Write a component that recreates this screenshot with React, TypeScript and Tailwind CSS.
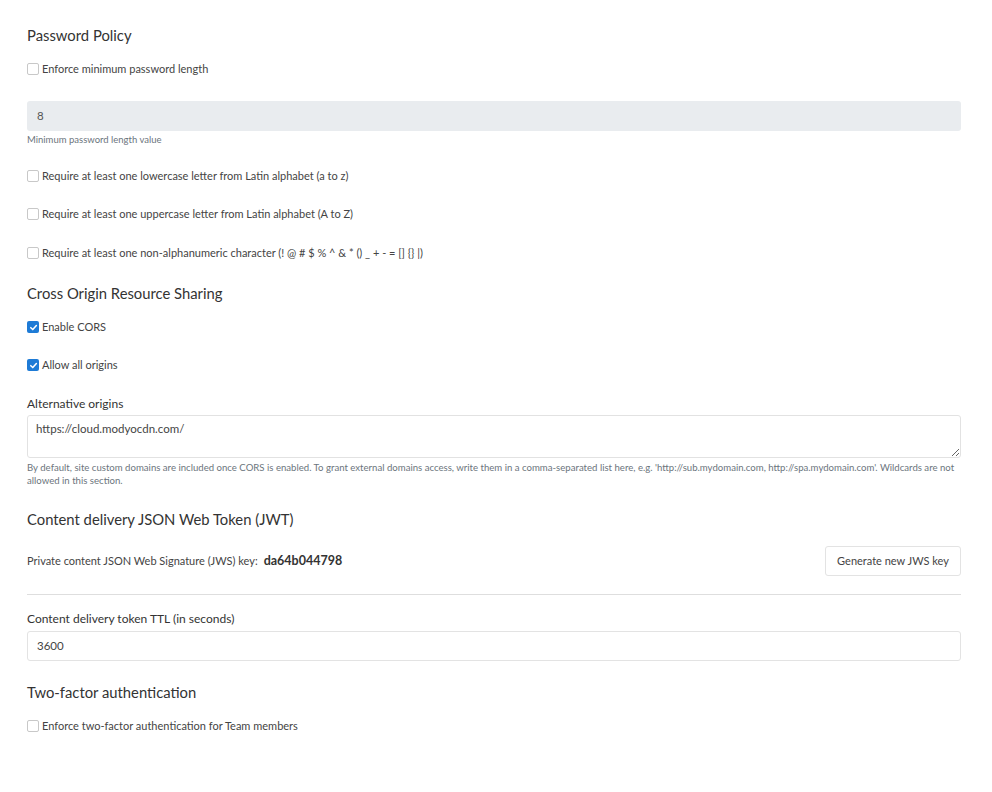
import React from "react";

const font = { fontFamily: "Lato, 'Noto Sans', sans-serif" };

function Check({ checked, label, className = "" }: { checked?: boolean; label: string; className?: string }) {
  return (
    <div className={"flex items-center h-4 " + className}>
      {checked ? (
        <span className="w-3 h-3 rounded-[2px] bg-[#1e7bd6] flex items-center justify-center">
          <svg width="9" height="9" viewBox="0 0 10 10">
            <path d="M2 5.2 L4.2 7.3 L8.2 2.8" stroke="white" strokeWidth="1.7" fill="none" strokeLinecap="round" strokeLinejoin="round" />
          </svg>
        </span>
      ) : (
        <span className="w-3 h-3 rounded-[2px] border border-[#c8c8c8] bg-white" />
      )}
      <span className="ml-[3px] text-[11px] text-[#444]">{label}</span>
    </div>
  );
}

function Heading({ children, className = "" }: { children: React.ReactNode; className?: string }) {
  return <div className={"h-5 leading-5 text-[14.8px] text-[#333] " + className}>{children}</div>;
}

export default function App() {
  return (
    <div className="bg-white w-[992px] h-[792px] pl-[27px] pr-[31px] pt-[25px] flex flex-col" style={font}>
      <Heading>Password Policy</Heading>
      <Check className="mt-4" label="Enforce minimum password length" />
      <div className="mt-6 h-[30px] rounded-[3px] bg-[#e9ecef] flex items-center pl-[10px] text-[11.5px] text-[#555]">8</div>
      <div className="mt-[3px] h-3 leading-3 text-[9.5px] text-[#6c757d]">Minimum password length value</div>
      <Check className="mt-[22px]" label="Require at least one lowercase letter from Latin alphabet (a to z)" />
      <Check className="mt-[22px]" label="Require at least one uppercase letter from Latin alphabet (A to Z)" />
      <Check className="mt-[23px]" label="Require at least one non-alphanumeric character (! @ # $ % ^ & * () _ + - = [] {} |)" />
      <Heading className="mt-[22px]">Cross Origin Resource Sharing</Heading>
      <Check className="mt-4" checked label="Enable CORS" />
      <Check className="mt-[22px]" checked label="Allow all origins" />
      <div className="mt-[23px] h-4 leading-4 text-[12px] text-[#333]">Alternative origins</div>
      <textarea
        className="mt-[3px] h-[43px] rounded-[3px] border border-[#e2e2e2] px-[8px] py-[4px] text-[11.5px] text-[#444] resize-y outline-none"
        style={font}
        defaultValue="https://cloud.modyocdn.com/"
      />
      <div className="mt-[3px] leading-[13px] text-[9.6px] text-[#6c757d]">
        By default, site custom domains are included once CORS is enabled. To grant external domains access, write them in a comma-separated list here, e.g. 'http://sub.mydomain.com, http://spa.mydomain.com'. Wildcards are not allowed in this section.
      </div>
      <Heading className="mt-[22px]">Content delivery JSON Web Token (JWT)</Heading>
      <div className="mt-[17px] h-[30px] flex items-center justify-between">
        <div className="text-[11px] text-[#444] flex items-center">
          Private content JSON Web Signature (JWS) key:
          <span className="ml-[6px] font-bold text-[12.5px] text-[#333]">da64b044798</span>
        </div>
        <button className="h-[30px] w-[136px] rounded-[3px] border border-[#e3e3e3] bg-white text-[11px] text-[#444]" style={font}>
          Generate new JWS key
        </button>
      </div>
      <div className="mt-[18px] h-px bg-[#dedede]" />
      <div className="mt-4 h-4 leading-4 text-[12px] text-[#333]">Content delivery token TTL (in seconds)</div>
      <div className="mt-1 h-[30px] rounded-[3px] border border-[#e3e3e3] flex items-center pl-[9px] text-[11.5px] text-[#444]">3600</div>
      <Heading className="mt-[21px]">Two-factor authentication</Heading>
      <Check className="mt-4" label="Enforce two-factor authentication for Team members" />
    </div>
  );
}
